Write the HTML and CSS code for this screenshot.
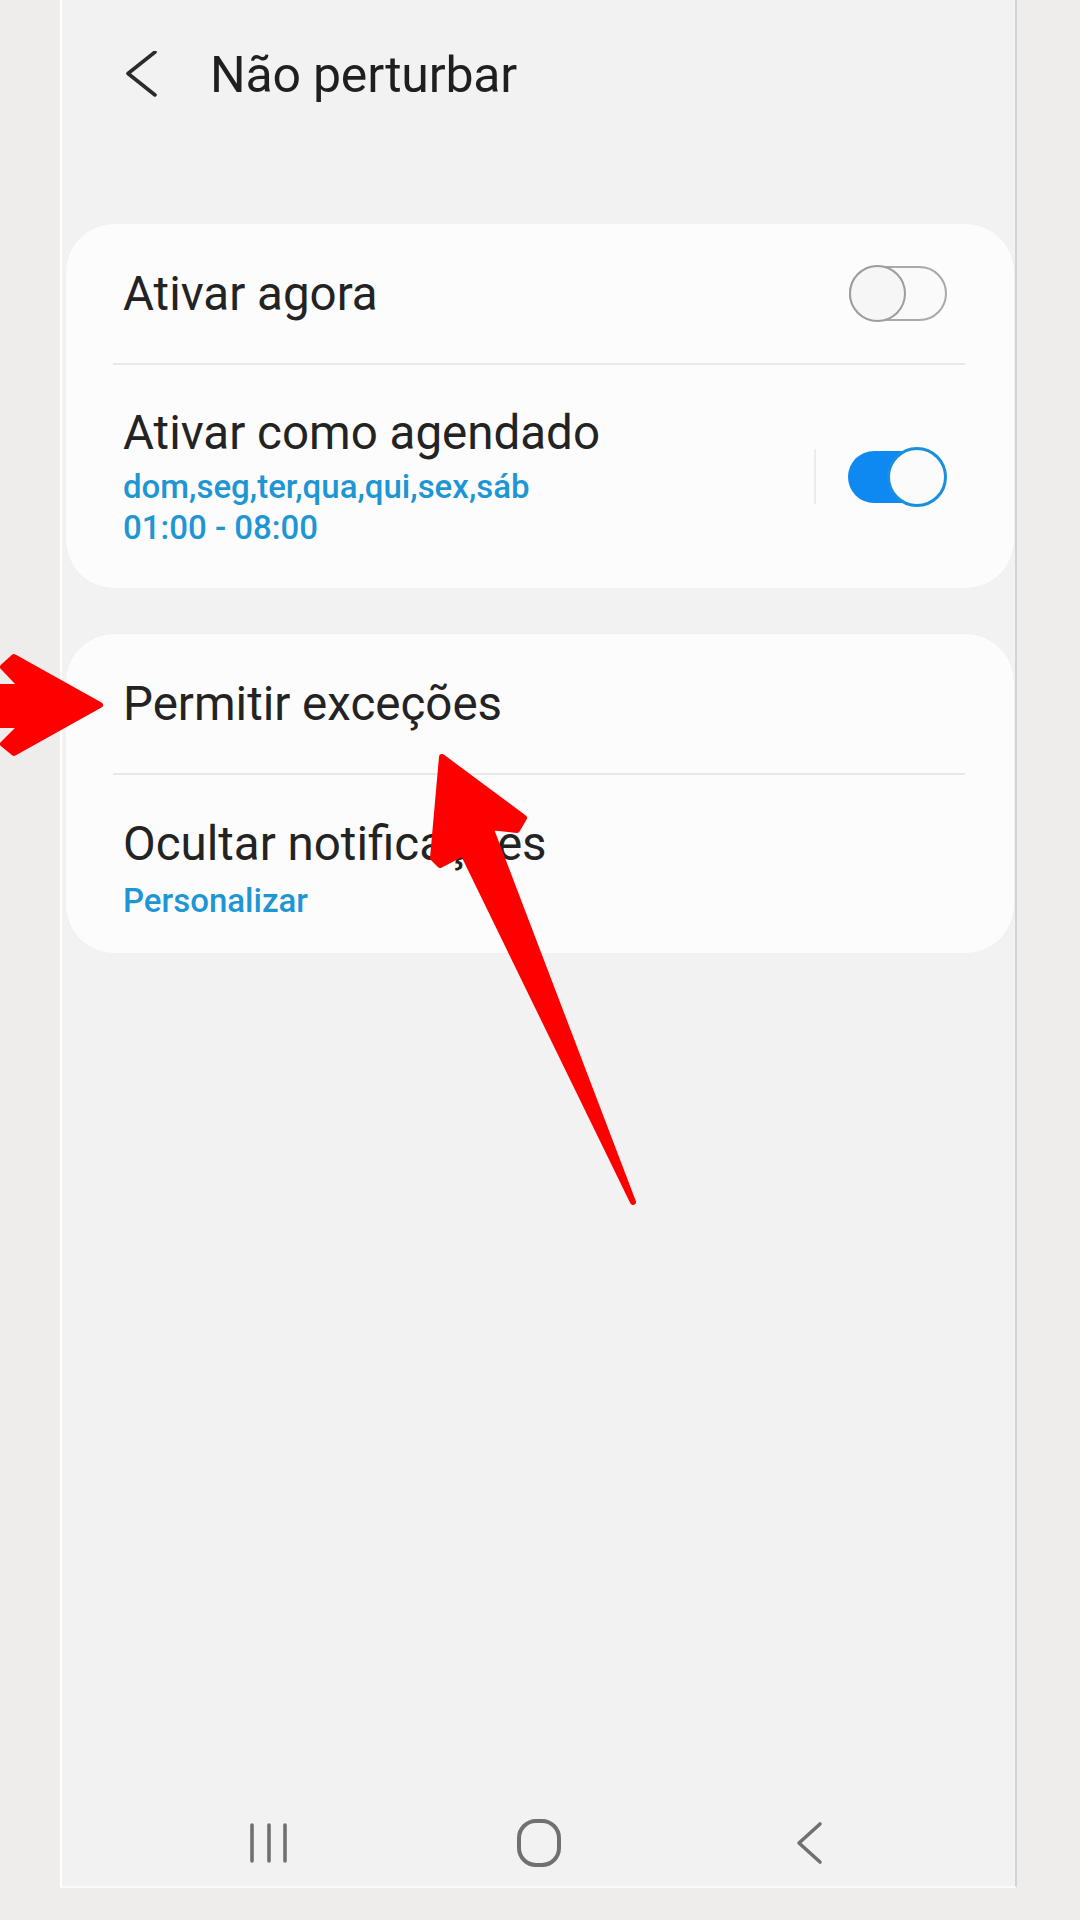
FILE: index.html
```html
<!DOCTYPE html>
<html lang="pt">
<head>
<meta charset="utf-8">
<title>Não perturbar</title>
<link rel="stylesheet" href="styles.css">
</head>
<body>
<div class="screen">
  <div class="phone">
    <header class="appbar">
      <svg class="back" width="32" height="48" viewBox="0 0 32 48"><polyline points="29,1 2,22.5 29,44" /></svg>
      <h1 class="title">Não perturbar</h1>
    </header>

    <section class="card card-first">
      <div class="row row-single">
        <span class="row-title">Ativar agora</span>
        <span class="switch switch-off"><span class="track"></span><span class="knob"></span></span>
      </div>
      <div class="divider"></div>
      <div class="row row-double">
        <div class="row-text">
          <div class="row-title">Ativar como agendado</div>
          <div class="row-sub">dom,seg,ter,qua,qui,sex,sáb<br>01:00 - 08:00</div>
        </div>
        <div class="row-end">
          <span class="vsep"></span>
          <span class="switch switch-on"><span class="track"></span><span class="knob"></span></span>
        </div>
      </div>
    </section>

    <section class="card card-second">
      <div class="row row-single">
        <span class="row-title">Permitir exceções</span>
      </div>
      <div class="divider"></div>
      <div class="row row-double row-top">
        <div class="row-text">
          <div class="row-title">Ocultar notificações</div>
          <div class="row-sub row-sub-tight">Personalizar</div>
        </div>
      </div>
    </section>

    <nav class="navbar">
      <span class="nav-btn">
        <svg width="60" height="44" viewBox="0 0 60 44"><line x1="13" y1="4" x2="13" y2="40"/><line x1="30" y1="4" x2="30" y2="40"/><line x1="46" y1="4" x2="46" y2="40"/></svg>
      </span>
      <span class="nav-btn">
        <svg width="60" height="48" viewBox="0 0 60 48"><rect x="10" y="2" width="40" height="44" rx="17" ry="17"/></svg>
      </span>
      <span class="nav-btn">
        <svg width="60" height="44" viewBox="0 0 60 44"><polyline points="41,3 20,22 41,41"/></svg>
      </span>
    </nav>
  </div>

  <svg class="annotations" width="1080" height="1920" viewBox="0 0 1080 1920">
    <polygon points="100,705 14,657 3,667 22,687 -10,687 -10,725 22,725 3,744 14,753" />
    <polygon points="442,757 524,818 517,830 490,827 633,1202 463,853 440,865 433,858" />
  </svg>
</div>
</body>
</html>
```

FILE: styles.css
```css
* { box-sizing: border-box; }

html, body {
  margin: 0;
  padding: 0;
}

body {
  background: #eeedeb;
  font-family: Roboto, "Noto Sans", "Liberation Sans", sans-serif;
  color: #222;
}

.screen {
  position: relative;
  width: 1080px;
  height: 1920px;
  padding-left: 60px;
  overflow: hidden;
}

.phone {
  width: 957px;
  height: 1888px;
  background: #f2f2f2;
  border-left: 2px solid #ffffff;
  border-right: 2px solid #d3d3d3;
  border-bottom: 2px solid #fbfbfb;
  display: flex;
  flex-direction: column;
}

/* header */
.appbar {
  display: flex;
  align-items: center;
  padding: 45px 0 0 64px;
  height: 105px;
}

.back {
  display: block;
  fill: none;
  stroke: #2b2b2b;
  stroke-width: 3.6;
  stroke-linecap: round;
  stroke-linejoin: round;
}

.title {
  margin: 0 0 0 52px;
  font-size: 50px;
  line-height: 60px;
  font-weight: 400;
  color: #1f1f1f;
  letter-spacing: -0.2px;
}

/* cards */
.card {
  margin-left: 4px;
  width: 948px;
  background: #fcfcfc;
  border-radius: 48px;
  box-shadow: 0 0 2px rgba(0, 0, 0, 0.04);
}

.card-first { margin-top: 119px; }
.card-second { margin-top: 46px; }

.row {
  display: flex;
  align-items: center;
  justify-content: space-between;
  padding: 0 67px 0 57px;
}

.row-single { height: 139px; }

.card-first .row-double { height: 223px; }

.card-second .row-double { height: 178px; }

.row-top {
  align-items: flex-start;
  padding-top: 41px;
}

.row-title {
  font-size: 47.5px;
  line-height: 56px;
  color: #232323;
  font-weight: 400;
}

.row-sub {
  margin-top: 5px;
  font-size: 33px;
  line-height: 41px;
  font-weight: 500;
  color: #1f96d4;
}

.row-sub-tight { margin-top: 8px; }

.divider {
  height: 2px;
  margin: 0 49px 0 47px;
  background: #e8e8e8;
}

.row-end {
  display: flex;
  align-items: center;
}

.vsep {
  width: 2px;
  height: 55px;
  background: #ececec;
  margin-right: 32px;
}

/* switches */
.switch {
  position: relative;
  display: block;
}

.switch-off {
  width: 98px;
  height: 57px;
}

.switch-off .track {
  position: absolute;
  left: 0;
  top: 1px;
  width: 98px;
  height: 55px;
  border: 2px solid #a9a9a9;
  border-radius: 28px;
  background: #fafafa;
}

.switch-off .knob {
  position: absolute;
  left: 0;
  top: 0;
  width: 57px;
  height: 57px;
  border-radius: 50%;
  border: 2px solid #9d9d9d;
  background: #f6f6f6;
}

.switch-on {
  width: 99px;
  height: 60px;
}

.switch-on .track {
  position: absolute;
  left: 0;
  top: 4px;
  width: 84px;
  height: 52px;
  border-radius: 26px;
  background: #0f89f2;
}

.switch-on .knob {
  position: absolute;
  right: 0;
  top: 0;
  width: 60px;
  height: 60px;
  border-radius: 50%;
  border: 3px solid #1a8fde;
  background: #fbfbfb;
}

/* nav bar */
.navbar {
  margin-top: auto;
  height: 86px;
  display: flex;
  align-items: center;
  justify-content: center;
  gap: 210px;
}

.nav-btn {
  width: 60px;
  display: flex;
  justify-content: center;
}

.nav-btn svg {
  display: block;
  fill: none;
  stroke: #707070;
  stroke-width: 3.6;
  stroke-linecap: round;
  stroke-linejoin: round;
}

.nav-btn rect { stroke-width: 4; }

/* red annotation arrows over the screenshot */
.annotations {
  position: absolute;
  left: 0;
  top: 0;
  pointer-events: none;
}

.annotations polygon {
  fill: #ff0000;
  stroke: #ff0000;
  stroke-width: 6;
  stroke-linejoin: round;
}
```
